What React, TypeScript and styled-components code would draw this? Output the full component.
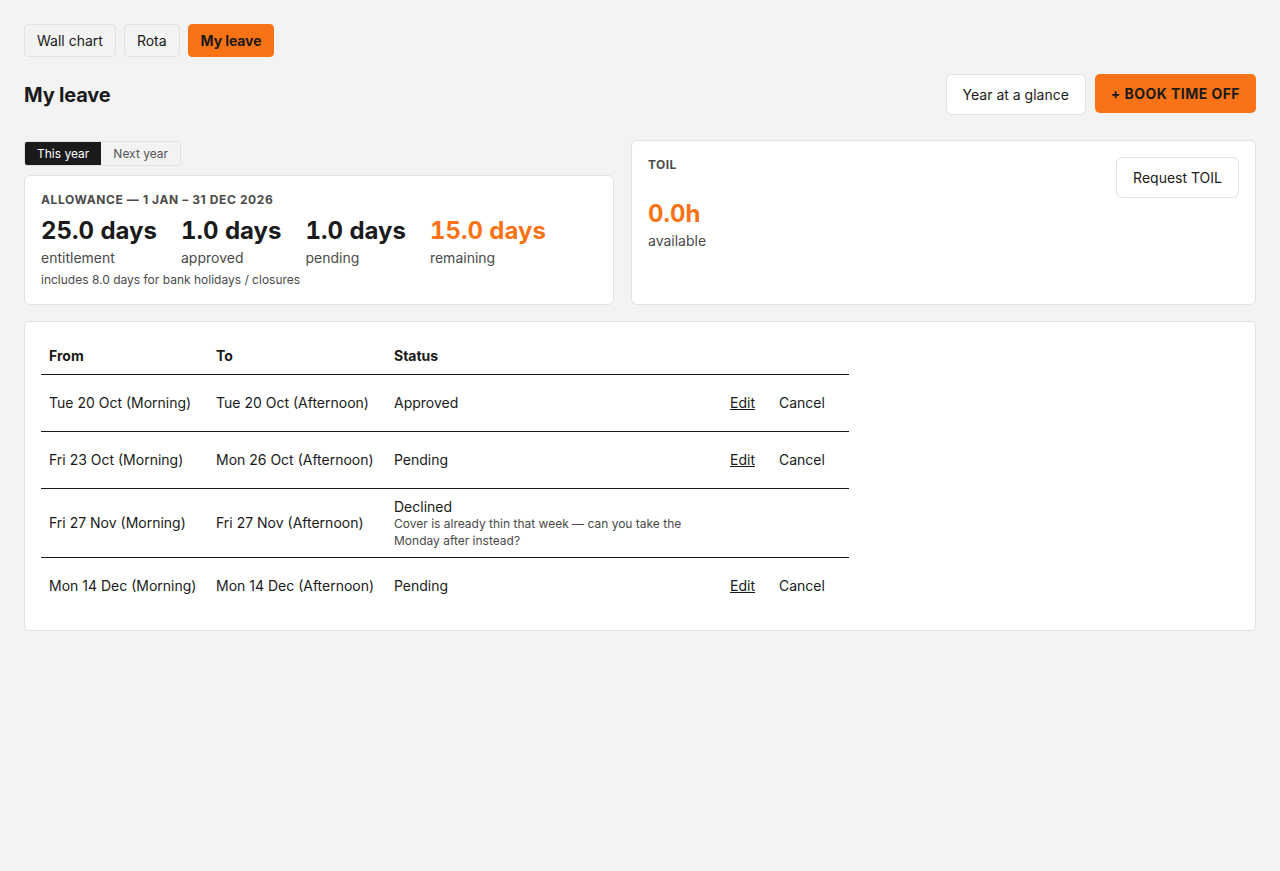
import React, { useState } from 'react';
import styled, { createGlobalStyle } from 'styled-components';

const GlobalStyle = createGlobalStyle`
  * { box-sizing: border-box; }
  body {
    margin: 0;
    background: #f3f3f3;
    font-family: Inter, "Noto Sans", "Liberation Sans", sans-serif;
    color: #1a1a1a;
  }
`;

const leaves = [
  { id: 1, from: 'Tue 20 Oct (Morning)', to: 'Tue 20 Oct (Afternoon)', status: 'Approved', note: '', actions: true },
  { id: 2, from: 'Fri 23 Oct (Morning)', to: 'Mon 26 Oct (Afternoon)', status: 'Pending', note: '', actions: true },
  {
    id: 3,
    from: 'Fri 27 Nov (Morning)',
    to: 'Fri 27 Nov (Afternoon)',
    status: 'Declined',
    note: 'Cover is already thin that week — can you take the Monday after instead?',
    actions: false,
  },
  { id: 4, from: 'Mon 14 Dec (Morning)', to: 'Mon 14 Dec (Afternoon)', status: 'Pending', note: '', actions: true },
];

const stats = [
  { value: '25.0 days', label: 'entitlement', accent: false },
  { value: '1.0 days', label: 'approved', accent: false },
  { value: '1.0 days', label: 'pending', accent: false },
  { value: '15.0 days', label: 'remaining', accent: true },
];

function App() {
  const [tab, setTab] = useState('My leave');
  const [year, setYear] = useState('This year');

  return (
    <Page>
      <GlobalStyle />
      <Tabs>
        {['Wall chart', 'Rota', 'My leave'].map((t) => (
          <Tab key={t} $active={tab === t} onClick={() => setTab(t)}>
            {t}
          </Tab>
        ))}
      </Tabs>

      <Header>
        <Title>My leave</Title>
        <HeaderActions>
          <OutlineButton>Year at a glance</OutlineButton>
          <PrimaryButton>+ Book time off</PrimaryButton>
        </HeaderActions>
      </Header>

      <TopRow>
        <LeftCol>
          <Toggle>
            {['This year', 'Next year'].map((y) => (
              <ToggleItem key={y} $active={year === y} onClick={() => setYear(y)}>
                {y}
              </ToggleItem>
            ))}
          </Toggle>
          <Card>
            <CardLabel>Allowance — 1 Jan – 31 Dec 2026</CardLabel>
            <Stats>
              {stats.map((s) => (
                <Stat key={s.label}>
                  <StatValue $accent={s.accent}>{s.value}</StatValue>
                  <StatLabel>{s.label}</StatLabel>
                </Stat>
              ))}
            </Stats>
            <Footnote>includes 8.0 days for bank holidays / closures</Footnote>
          </Card>
        </LeftCol>

        <Card>
          <ToilHead>
            <SmallLabel>TOIL</SmallLabel>
            <OutlineButton>Request TOIL</OutlineButton>
          </ToilHead>
          <StatValue $accent>0.0h</StatValue>
          <StatLabel>available</StatLabel>
        </Card>
      </TopRow>

      <TableCard>
        <Table>
          <colgroup>
            <col style={{ width: 167 }} />
            <col style={{ width: 178 }} />
            <col style={{ width: 336 }} />
            <col style={{ width: 127 }} />
          </colgroup>
          <thead>
            <tr>
              <Th>From</Th>
              <Th>To</Th>
              <Th>Status</Th>
              <Th />
            </tr>
          </thead>
          <tbody>
            {leaves.map((l) => (
              <Row key={l.id}>
                <Td>{l.from}</Td>
                <Td>{l.to}</Td>
                <Td>
                  <StatusText>{l.status}</StatusText>
                  {l.note && <Note>{l.note}</Note>}
                </Td>
                <Td>
                  {l.actions && (
                    <Actions>
                      <EditLink>Edit</EditLink>
                      <CancelLink>Cancel</CancelLink>
                    </Actions>
                  )}
                </Td>
              </Row>
            ))}
          </tbody>
        </Table>
      </TableCard>
    </Page>
  );
}

export default App;

const Page = styled.div`
  padding: 24px;
  min-height: 871px;
`;

const Tabs = styled.div`
  display: flex;
  gap: 8px;
  margin-bottom: 17px;
`;

const Tab = styled.button<{ $active: boolean }>`
  font-family: inherit;
  font-size: 14px;
  line-height: 19px;
  padding: 6px 12px;
  border-radius: 4px;
  border: 1px solid ${(p) => (p.$active ? '#f97316' : '#e2e2e2')};
  background: ${(p) => (p.$active ? '#f97316' : 'transparent')};
  color: #1a1a1a;
  font-weight: ${(p) => (p.$active ? 700 : 400)};
  letter-spacing: ${(p) => (p.$active ? '-0.1px' : '0')};
  cursor: pointer;
`;

const Header = styled.div`
  display: flex;
  align-items: center;
  justify-content: space-between;
  margin-bottom: 25px;
`;

const Title = styled.h1`
  margin: 0;
  font-size: 20px;
  font-weight: 700;
  letter-spacing: -0.2px;
`;

const HeaderActions = styled.div`
  display: flex;
  align-items: center;
  gap: 9px;
`;

const OutlineButton = styled.button`
  font-family: inherit;
  font-size: 14px;
  line-height: 19px;
  padding: 10px 16px;
  background: #fff;
  border: 1px solid #e2e2e2;
  border-radius: 6px;
  color: #1a1a1a;
  cursor: pointer;
`;

const PrimaryButton = styled.button`
  font-family: inherit;
  font-size: 14px;
  line-height: 19px;
  font-weight: 700;
  letter-spacing: 0.45px;
  text-transform: uppercase;
  padding: 10px 16px;
  background: #f97316;
  border: none;
  border-radius: 5px;
  color: #1a1a1a;
  cursor: pointer;
  margin-top: -2px;
`;

const TopRow = styled.div`
  display: grid;
  grid-template-columns: 590px 1fr;
  gap: 17px;
  margin-bottom: 16px;
`;

const LeftCol = styled.div`
  display: flex;
  flex-direction: column;
  align-items: flex-start;
  gap: 9px;
  padding-top: 1px;

  & > div:last-child {
    align-self: stretch;
  }
`;

const Toggle = styled.div`
  display: flex;
  border: 1px solid #e2e2e2;
  border-radius: 3px;
  overflow: hidden;
`;

const ToggleItem = styled.div<{ $active: boolean }>`
  font-size: 12px;
  line-height: 15px;
  padding: 4px 12px;
  background: ${(p) => (p.$active ? '#1a1a1a' : 'transparent')};
  color: ${(p) => (p.$active ? '#fff' : '#555')};
  cursor: pointer;
`;

const Card = styled.div`
  background: #fff;
  border: 1px solid #e2e2e2;
  border-radius: 6px;
  padding: 16px;
`;

const CardLabel = styled.div`
  font-size: 12px;
  line-height: 16px;
  font-weight: 700;
  text-transform: uppercase;
  letter-spacing: 0.6px;
  color: #4a4a4a;
  margin-bottom: 8px;
`;

const SmallLabel = styled.div`
  font-size: 12px;
  line-height: 16px;
  font-weight: 700;
  letter-spacing: 0.4px;
  color: #4a4a4a;
`;

const Stats = styled.div`
  display: flex;
  gap: 24px;
`;

const Stat = styled.div`
  display: flex;
  flex-direction: column;
`;

const StatValue = styled.div<{ $accent?: boolean }>`
  font-size: 24px;
  line-height: 30px;
  font-weight: 700;
  font-variant-numeric: tabular-nums;
  color: ${(p) => (p.$accent ? '#f97316' : '#1a1a1a')};
  margin-bottom: 2px;
`;

const StatLabel = styled.div`
  font-size: 14px;
  line-height: 20px;
  color: #4a4a4a;
`;

const Footnote = styled.div`
  font-size: 12px;
  line-height: 16px;
  color: #4a4a4a;
  margin-top: 4px;
`;

const ToilHead = styled.div`
  display: flex;
  justify-content: space-between;
  align-items: flex-start;
  margin-bottom: 1px;
`;

const TableCard = styled.div`
  background: #fff;
  border: 1px solid #e2e2e2;
  border-radius: 6px;
  padding: 16px;
`;

const Table = styled.table`
  width: 808px;
  border-collapse: collapse;
  table-layout: fixed;
  font-size: 14px;
  line-height: 20px;
`;

const Th = styled.th`
  text-align: left;
  font-weight: 700;
  padding: 8px;
  border-bottom: 1px solid #1a1a1a;
`;

const Row = styled.tr`
  height: 57px;
  & + & td {
    border-top: 1px solid #1a1a1a;
  }
  &:last-child {
    height: 56px;
  }
`;

const Td = styled.td`
  padding: 8px;
  vertical-align: middle;
`;

const StatusText = styled.div`
  line-height: 20px;
`;

const Note = styled.div`
  font-size: 12px;
  line-height: 17px;
  color: #4a4a4a;
  margin-top: -2px;
`;

const Actions = styled.div`
  display: flex;
  gap: 24px;
`;

const EditLink = styled.a`
  text-decoration: underline;
  color: #1a1a1a;
  cursor: pointer;
`;

const CancelLink = styled.a`
  color: #1a1a1a;
  cursor: pointer;
`;
